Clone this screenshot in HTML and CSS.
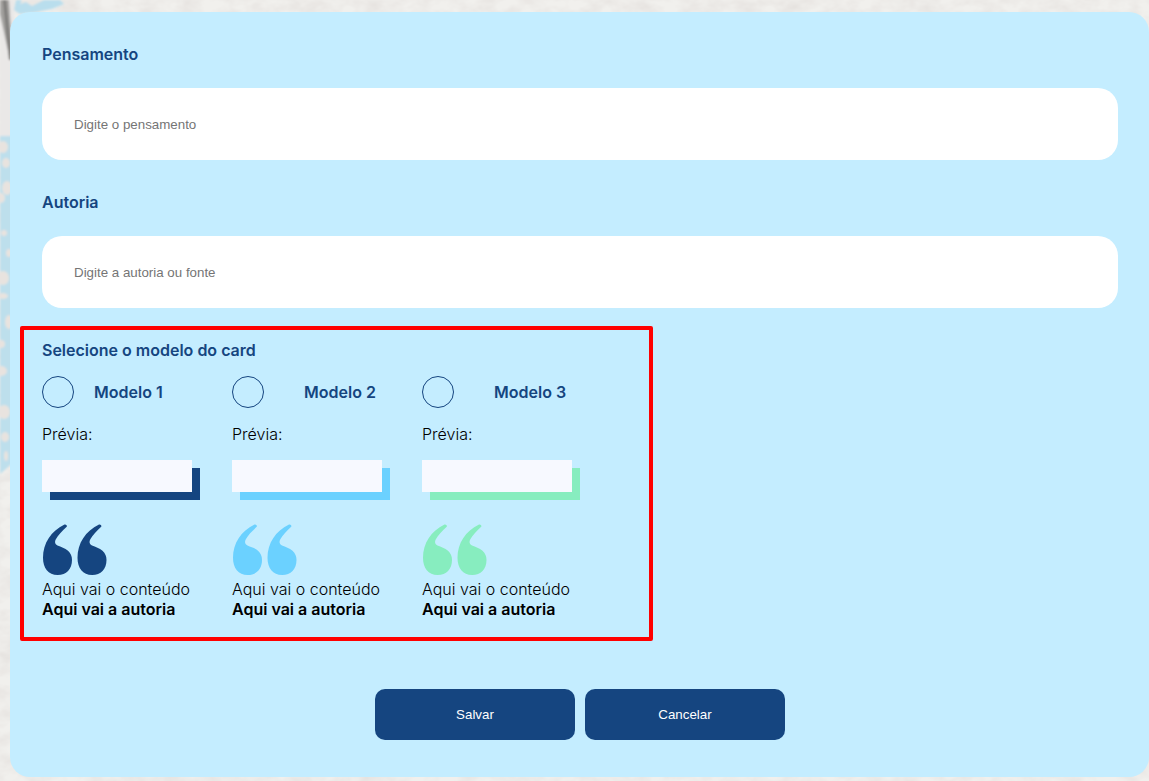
FILE: index.html
```html
<!DOCTYPE html>
<html lang="pt-BR">
<head>
<meta charset="utf-8">
<title>Pensamento</title>
<link rel="stylesheet" href="styles.css">
</head>
<body>
<svg class="backdrop" aria-hidden="true">
  <defs>
    <filter id="grain" x="0" y="0" width="100%" height="100%">
      <feTurbulence type="fractalNoise" baseFrequency="0.05 0.08" numOctaves="3" seed="4"/>
      <feColorMatrix values="0 0 0 0 0.72  0 0 0 0 0.68  0 0 0 0 0.66  0.9 0 0 0 -0.28"/>
    </filter>
    <filter id="soft"><feGaussianBlur stdDeviation="1"/></filter>
  </defs>
  <rect width="100%" height="100%" fill="#f1f0ed"/>
  <rect width="100%" height="100%" filter="url(#grain)"/>
  <g filter="url(#soft)">
    <path d="M0 0H14V140H0Z" fill="#eae8e7"/>
    <path d="M0 0H9L13 60H10L0 14Z" fill="#a3a19f"/>
    <path d="M3 0H6L12 60H9Z" fill="#7d7b79"/>
    <path d="M16 0H60L64 4L52 9L36 12L20 14L14 10Z" fill="#b9deed"/>
    <path d="M20 4L26 2L32 6L40 2L44 0H30L22 0Z" fill="#ebe7e3"/>
    <path d="M0 136H14V462L0 474Z" fill="#bddfec"/>
    <g fill="#e8e3df">
      <ellipse cx="3" cy="147" rx="5" ry="6"/><ellipse cx="6" cy="163" rx="4" ry="5"/><ellipse cx="7" cy="188" rx="5" ry="7"/>
      <ellipse cx="1" cy="198" rx="4" ry="5"/><ellipse cx="4" cy="233" rx="3" ry="3"/><ellipse cx="9" cy="253" rx="3" ry="4"/>
      <ellipse cx="3" cy="278" rx="6" ry="7"/><ellipse cx="3" cy="296" rx="5" ry="3"/><ellipse cx="9" cy="322" rx="4" ry="7"/>
      <ellipse cx="1" cy="344" rx="4" ry="4"/><ellipse cx="1" cy="371" rx="6" ry="5"/><ellipse cx="4" cy="412" rx="6" ry="7"/>
      <ellipse cx="5" cy="437" rx="4" ry="5"/><ellipse cx="6" cy="456" rx="2" ry="5"/>
    </g>
  </g>
</svg>
<form class="card">
  <div class="field">
    <label class="title" for="pensamento">Pensamento</label>
    <input class="text-input" id="pensamento" type="text" placeholder="Digite o pensamento">
  </div>
  <div class="field">
    <label class="title" for="autoria">Autoria</label>
    <input class="text-input" id="autoria" type="text" placeholder="Digite a autoria ou fonte">
  </div>
  <div class="models" role="radiogroup" aria-labelledby="modelos">
    <span class="title" id="modelos">Selecione o modelo do card</span>
    <div class="model-list">
      <div class="model navy">
        <div class="option first"><input class="radio" type="radio" name="modelo" id="m1"><label class="title" for="m1">Modelo 1</label></div>
        <span>Prévia:</span>
        <div class="preview"></div>
        <div class="quote">
          <svg class="marks" viewBox="0 0 65 51" aria-hidden="true"><defs><path id="mark" d="M22.5 0.6C23.7 -0.2 25.5 1.6 24.7 2.8C20.5 6.8 16 11 13.7 15.5C12.5 18 12.9 20.3 15.5 21.6C19 23.2 23 24 26 26.8C28.8 29.3 30 32.3 30 36C30 45 24.4 51 15.7 51C6.2 51 1 44.2 1 33.8C1 19.5 9 7 22.5 0.6Z"/></defs><use href="#mark"/><use href="#mark" x="34.5"/></svg>
          <span>Aqui vai o conteúdo</span>
          <strong>Aqui vai a autoria</strong>
        </div>
      </div>
      <div class="model sky">
        <div class="option"><input class="radio" type="radio" name="modelo" id="m2"><label class="title" for="m2">Modelo 2</label></div>
        <span>Prévia:</span>
        <div class="preview"></div>
        <div class="quote">
          <svg class="marks" viewBox="0 0 65 51" aria-hidden="true"><use href="#mark"/><use href="#mark" x="34.5"/></svg>
          <span>Aqui vai o conteúdo</span>
          <strong>Aqui vai a autoria</strong>
        </div>
      </div>
      <div class="model mint">
        <div class="option"><input class="radio" type="radio" name="modelo" id="m3"><label class="title" for="m3">Modelo 3</label></div>
        <span>Prévia:</span>
        <div class="preview"></div>
        <div class="quote">
          <svg class="marks" viewBox="0 0 65 51" aria-hidden="true"><use href="#mark"/><use href="#mark" x="34.5"/></svg>
          <span>Aqui vai o conteúdo</span>
          <strong>Aqui vai a autoria</strong>
        </div>
      </div>
    </div>
  </div>
  <div class="actions">
    <button class="button" type="button">Salvar</button>
    <button class="button" type="button">Cancelar</button>
  </div>
</form>
</body>
</html>
```
FILE: styles.css
```css
* { box-sizing: border-box; }
body {
  margin: 0;
  padding: 12px 0 4px 10px;
  font: 300 16px/20px Inter, sans-serif;
  color: #000;
  background: #f1f0ed;
}
.backdrop {
  position: absolute;
  inset: 0;
  width: 100%;
  height: 100%;
  z-index: -1;
}
.card {
  display: flex;
  flex-direction: column;
  gap: 32px;
  padding: 32px 31px 37px 32px;
  border-radius: 20px;
  background: #c4edff;
}
.title { color: #154580; font-weight: 600; }
.field { display: flex; flex-direction: column; gap: 24px; }
.text-input {
  width: 100%;
  height: 72px;
  padding: 0 32px;
  border: 0;
  border-radius: 20px;
  background: #fff;
  font-family: "Liberation Sans", Arial, sans-serif;
}
.text-input::placeholder { color: #757575; opacity: 1; }
.models {
  position: relative;
  display: flex;
  flex-direction: column;
  gap: 16px;
  width: fit-content;
}
.models::after {
  content: "";
  position: absolute;
  inset: -14px -81px -22px -22px;
  border: 4px solid #f00;
  border-radius: 2px;
  pointer-events: none;
}
.model-list { display: flex; gap: 40px; }
.model { display: flex; flex-direction: column; gap: 16px; width: 150px; }
.navy { --accent: #154580; }
.sky { --accent: #6bd1ff; }
.mint { --accent: #87edbf; }
.option { display: flex; align-items: center; gap: 40px; white-space: nowrap; }
.option.first { gap: 20px; }
.radio {
  appearance: none;
  flex: none;
  width: 32px;
  height: 32px;
  margin: 0;
  border: 1px solid #154580;
  border-radius: 50%;
}
.radio:checked { background: #154580; }
.preview {
  height: 32px;
  background: #f7f9ff;
  box-shadow: 8px 8px 0 var(--accent);
}
.quote { display: flex; flex-direction: column; padding-top: 16px; white-space: nowrap; }
.marks { width: 65px; height: 51px; margin-bottom: 4px; fill: var(--accent); }
strong { font-weight: 600; }
.actions { display: flex; justify-content: center; gap: 10px; padding-top: 38px; }
.button {
  width: 200px;
  height: 51px;
  border: 0;
  border-radius: 10px;
  background: #154580;
  color: #fff;
  font-family: "Liberation Sans", Arial, sans-serif;
}
```
